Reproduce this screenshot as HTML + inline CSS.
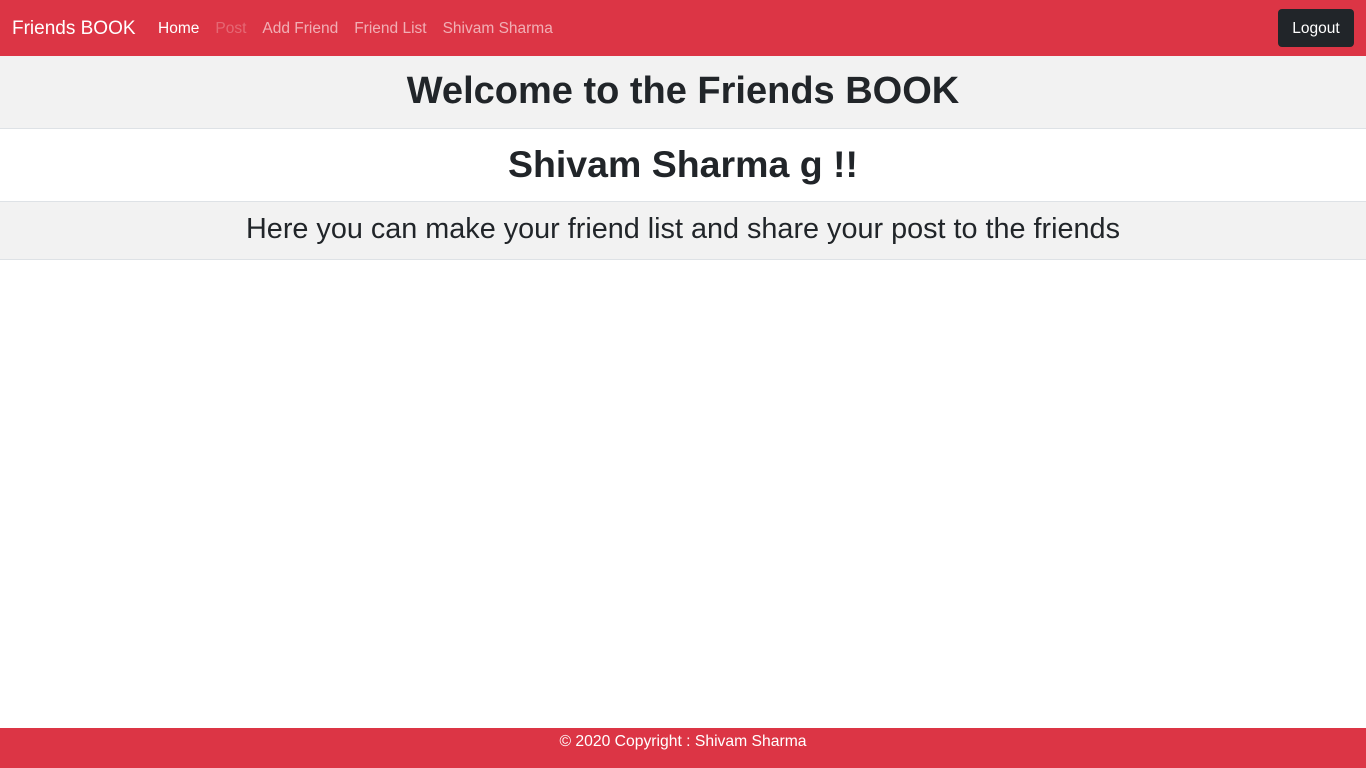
<!DOCTYPE html>
<html><head><meta charset="utf-8"><style>
*{margin:0;padding:0;box-sizing:border-box}
body{width:1366px;height:768px;font-family:"Liberation Sans",sans-serif;color:#212529;background:#fff;position:relative;overflow:hidden}
nav{height:56px;background:#dc3545;position:relative}
.brand{position:absolute;left:12px;top:18px;font-size:19px;color:#fff}
.links{position:absolute;left:158px;top:20px;font-size:15.5px;white-space:nowrap}
.links span{margin-right:16px;color:rgba(255,255,255,.6)}
.links .a{color:#fff}.links .d{color:rgba(255,255,255,.25)}
.btn{position:absolute;right:12px;top:9px;width:76px;height:38px;background:#212529;border-radius:4px;color:#fff;font-size:15.5px;text-align:center;line-height:40px}
.b{text-align:center;border-bottom:1px solid #dee2e6}
.b1{height:73px;background:#f2f2f2;font-size:38px;font-weight:bold;line-height:70px}
.b2{height:73px;background:#fff;font-size:37.5px;font-weight:bold;line-height:70px}
.b3{height:58px;background:#f2f2f2;font-size:28.8px;line-height:54px}
footer{position:absolute;left:0;bottom:0;width:1366px;height:40px;background:#dc3545;color:#fff;text-align:center;font-size:15.7px;line-height:27px}
</style></head><body>
<nav><div class="brand">Friends BOOK</div>
<div class="links"><span class="a">Home</span><span class="d">Post</span><span>Add Friend</span><span>Friend List</span><span>Shivam Sharma</span></div>
<div class="btn">Logout</div></nav>
<div class="b b1">Welcome to the Friends BOOK</div>
<div class="b b2">Shivam Sharma g !!</div>
<div class="b b3">Here you can make your friend list and share your post to the friends</div>
<footer>© 2020 Copyright : Shivam Sharma</footer>
</body></html>
